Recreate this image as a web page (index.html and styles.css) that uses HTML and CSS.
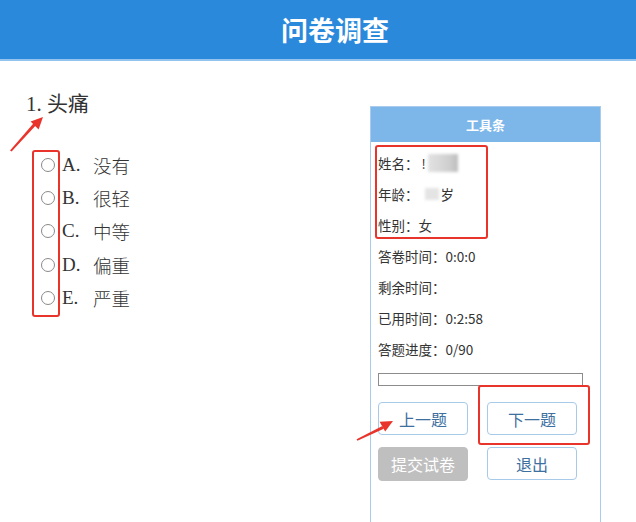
FILE: index.html
```html
<!DOCTYPE html>
<html lang="zh">
<head>
<meta charset="utf-8">
<title>问卷调查</title>
<link rel="stylesheet" href="styles.css">
</head>
<body>
<header class="topbar"><h1 class="title">问卷调查</h1></header>
<main class="main">
  <section class="question">
    <div class="q-title"><span class="num">1.</span> 头痛</div>
    <ul class="options">
      <li class="opt"><span class="radio"></span><span class="letter">A.</span><span class="label">没有</span></li>
      <li class="opt"><span class="radio"></span><span class="letter">B.</span><span class="label">很轻</span></li>
      <li class="opt"><span class="radio"></span><span class="letter">C.</span><span class="label">中等</span></li>
      <li class="opt"><span class="radio"></span><span class="letter">D.</span><span class="label">偏重</span></li>
      <li class="opt"><span class="radio"></span><span class="letter">E.</span><span class="label">严重</span></li>
    </ul>
  </section>
  <aside class="panel">
    <div class="panel-head">工具条</div>
    <div class="panel-body">
      <div class="line">姓名：<span class="bang">!</span><span class="blur blur-name"></span></div>
      <div class="line">年龄：<span class="blur blur-age"></span>岁</div>
      <div class="line">性别：女</div>
      <div class="line">答卷时间：0:0:0</div>
      <div class="line">剩余时间：</div>
      <div class="line">已用时间：0:2:58</div>
      <div class="line">答题进度：0/90</div>
      <div class="progress"></div>
      <div class="buttons">
        <button class="btn">上一题</button>
        <button class="btn">下一题</button>
        <button class="btn btn-disabled">提交试卷</button>
        <button class="btn">退出</button>
      </div>
    </div>
  </aside>
</main>
<div class="overlay">
  <div class="mark mark-radios"></div>
  <div class="mark mark-info"></div>
  <div class="mark mark-next"></div>
  <svg class="arrows" width="636" height="522" viewBox="0 0 636 522">
    <polygon points="10,150.6 11.6,151.4 35.7,125.4 33.6,123.3" fill="#e8342b"/>
    <polygon points="43,117 38.6,129.6 30.6,121.6" fill="#e8342b"/>
    <polygon points="356.6,439.2 357.4,440.8 383.8,428.7 382.3,425.9" fill="#e8342b"/>
    <polygon points="393,421 385.2,431.6 379.6,421.8" fill="#e8342b"/>
  </svg>
</div>
</body>
</html>
```
FILE: styles.css
```css
* { box-sizing: border-box; }
html, body { margin: 0; padding: 0; }
body {
  width: 636px;
  height: 522px;
  overflow: hidden;
  background: #fff;
  font-family: "Noto Sans CJK SC", sans-serif;
  color: #333;
  position: relative;
}
.topbar {
  height: 61px;
  background: #2b89dc;
  border-bottom: 2px solid #93c4f0;
  padding-left: 34px;
}
.title {
  margin: 0;
  text-align: center;
  line-height: 59px;
  font-size: 27px;
  font-weight: 700;
  color: #fff;
}
.main {
  display: grid;
  grid-template-columns: 1fr 231px;
  padding-right: 35px;
}
.question {
  padding: 28px 0 0 26px;
}
.q-title {
  font-family: "Liberation Serif", "Noto Sans CJK SC", serif;
  font-size: 21px;
  line-height: 30px;
  color: #333;
}
.options {
  list-style: none;
  margin: 29px 0 0 15px;
  padding: 0;
}
.opt {
  display: flex;
  align-items: center;
  height: 33.3px;
  font-size: 18.5px;
  color: #333;
}
.radio {
  width: 14px;
  height: 14px;
  border: 1px solid #8a8a8a;
  border-radius: 50%;
  background: #fff;
  margin-right: 7px;
}
.letter {
  font-family: "Liberation Serif", serif;
  width: 31px;
  font-size: 19px;
}
.label {
  font-family: "Noto Sans CJK SC", serif;
  font-weight: 300;
}
.panel {
  margin-top: 45px;
  height: 430px;
  border: 1px solid #a9cbec;
  border-bottom: none;
}
.panel-head {
  height: 35px;
  line-height: 35px;
  background: #7db7ea;
  color: #fff;
  font-size: 13px;
  font-weight: 700;
  text-align: center;
}
.panel-body {
  padding: 5.5px 0 0 7px;
}
.line {
  height: 31px;
  line-height: 31px;
  font-size: 13.5px;
  color: #333;
  display: flex;
  align-items: center;
}
.bang { font-size: 13px; margin-left: 3px; }
.blur {
  display: inline-block;
  filter: blur(1.5px);
}
.blur-name {
  width: 30px;
  height: 18px;
  margin-left: 2px;
  background: linear-gradient(90deg, #e2e2e2, #cfcfcf 70%, #bdbdbd);
}
.blur-age {
  width: 14px;
  height: 12px;
  margin: 0 2px 0 6px;
  background: #e4e4e4;
}
.progress {
  margin-top: 8.5px;
  width: 205px;
  height: 13px;
  border: 1px solid #8c8c8c;
}
.buttons {
  margin-top: 16px;
  display: grid;
  grid-template-columns: 90px 90px;
  column-gap: 19px;
  row-gap: 12px;
}
.btn {
  height: 33px;
  padding: 0;
  background: #fff;
  border: 1px solid #a6cae8;
  border-radius: 4px;
  font-family: "Noto Sans CJK SC", sans-serif;
  font-size: 16px;
  color: #3d6f9f;
}
.btn-disabled {
  background: #bfbfbf;
  border-color: #bfbfbf;
  color: #fff;
  height: 34px;
}
.overlay {
  position: absolute;
  left: 0;
  top: 0;
  width: 636px;
  height: 522px;
  pointer-events: none;
}
.mark {
  position: absolute;
  border: 2px solid #e8342b;
  border-radius: 3px;
}
.mark-radios { left: 32px; top: 150px; width: 28px; height: 167px; }
.mark-info { left: 375px; top: 145px; width: 113px; height: 94px; }
.mark-next { left: 478px; top: 385px; width: 112px; height: 60px; }
.arrows { position: absolute; left: 0; top: 0; }
```
